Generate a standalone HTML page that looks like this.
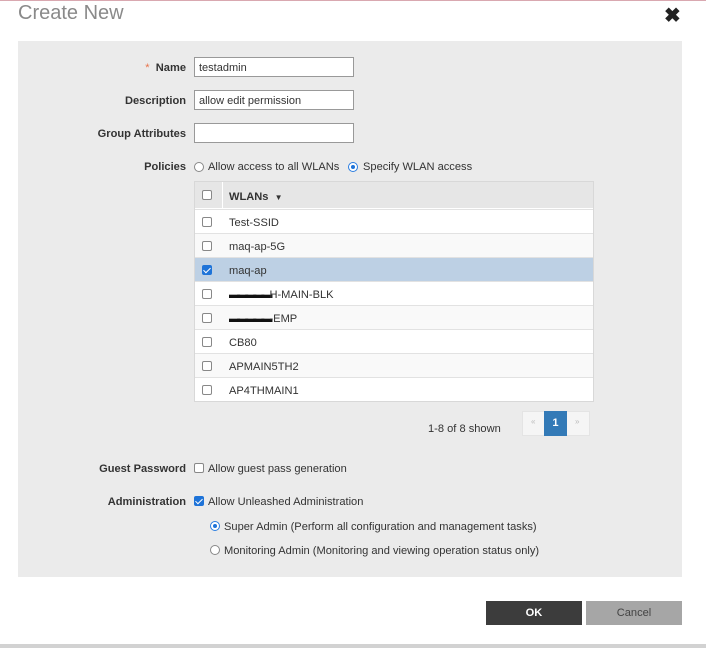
<!DOCTYPE html>
<html><head><style>
*{box-sizing:border-box;margin:0;padding:0}
body{width:706px;height:648px;background:#fff;font-family:"Liberation Sans",Arial,sans-serif;font-size:11.1px;color:#333;position:relative;overflow:hidden}
.a{position:absolute;white-space:nowrap}
.lbl{position:absolute;right:520px;font-weight:bold;color:#333}
.inp{position:absolute;left:194px;width:160px;height:20px;border:1px solid #999;background:#fff;padding:4px 4px;font-size:11px}
.cb{position:absolute;width:10px;height:10px;border:1px solid #888;border-radius:2px;background:#fff}
.cbc{background:#1e73d8;border-color:#1e73d8}
.cbc:after{content:"";position:absolute;left:2px;top:0px;width:3px;height:6px;border:solid #fff;border-width:0 1.5px 1.5px 0;transform:rotate(45deg)}
.rd{position:absolute;width:10px;height:10px;border:1px solid #888;border-radius:50%;background:#fff}
.rdc{border-color:#2a7de1}
.rdc:after{content:"";position:absolute;left:2px;top:2px;width:4px;height:4px;border-radius:50%;background:#1e73d8}
.row{position:absolute;left:195px;width:398px;height:24px;border-top:1px solid #e2e2e2}
.row span{position:absolute;left:34px;top:7px}
.row .cb{left:7px;top:7px}
</style></head><body>
<div class="a" style="left:0;top:0;width:706px;height:1px;background:#d9a8b0"></div>
<div class="a" style="left:18px;top:2px;font-size:20px;color:#8a8a8a">Create New</div>
<div class="a" style="left:664px;top:3px;font-size:20px;font-weight:bold;color:#222">✖</div>
<div class="a" style="left:18px;top:41px;width:664px;height:536px;background:#ebebeb"></div>

<div class="lbl" style="top:62px"><span style="color:#e8734a;font-weight:normal">*</span>&nbsp; Name</div>
<div class="inp" style="top:57px">testadmin</div>
<div class="lbl" style="top:95px">Description</div>
<div class="inp" style="top:90px">allow edit permission</div>
<div class="lbl" style="top:128px">Group Attributes</div>
<div class="inp" style="top:123px"></div>
<div class="lbl" style="top:161px">Policies</div>
<div class="rd" style="left:194px;top:162px"></div>
<div class="a" style="left:208px;top:161px">Allow access to all WLANs</div>
<div class="rd rdc" style="left:348px;top:162px"></div>
<div class="a" style="left:363px;top:161px">Specify WLAN access</div>

<div class="a" style="left:194px;top:181px;width:400px;height:221px;border:1px solid #d8d8d8;background:#fff"></div>
<div class="a" style="left:195px;top:182px;width:398px;height:26px;background:#e6e6e6"></div>
<div class="a" style="left:222px;top:182px;width:1px;height:26px;background:#fff"></div>
<div class="cb" style="left:202px;top:190px"></div>
<div class="a" style="left:229px;top:191px;font-weight:bold">WLANs &nbsp;<span style="font-size:8px">▼</span></div>
<div class="row" style="top:209px"><div class="cb"></div><span>Test-SSID</span></div>
<div class="row" style="top:233px;background:#f9f9f9"><div class="cb"></div><span>maq-ap-5G</span></div>
<div class="row" style="top:257px;background:#bdd0e4"><div class="cb cbc"></div><span>maq-ap</span></div>
<div class="row" style="top:281px"><div class="cb"></div><span><b style="letter-spacing:-3px;color:#111">▬▬▬▬▬</b>H-MAIN-BLK</span></div>
<div class="row" style="top:305px;background:#f9f9f9"><div class="cb"></div><span><b style="letter-spacing:-3px;color:#111">▬▬▬▬▬</b>-EMP</span></div>
<div class="row" style="top:329px"><div class="cb"></div><span>CB80</span></div>
<div class="row" style="top:353px;background:#f9f9f9"><div class="cb"></div><span>APMAIN5TH2</span></div>
<div class="row" style="top:377px"><div class="cb"></div><span>AP4THMAIN1</span></div>

<div class="a" style="left:428px;top:423px">1-8 of 8 shown</div>
<div class="a" style="left:522px;top:411px;width:68px;height:25px;background:#f5f5f5;border:1px solid #e4e4e4"></div>
<div class="a" style="left:531px;top:417px;font-size:8px;color:#bbb">«</div>
<div class="a" style="left:544px;top:411px;width:23px;height:25px;background:#337ab7;color:#fff;font-weight:bold;text-align:center;line-height:25px">1</div>
<div class="a" style="left:575px;top:417px;font-size:8px;color:#bbb">»</div>

<div class="lbl" style="top:463px">Guest Password</div>
<div class="cb" style="left:194px;top:463px"></div>
<div class="a" style="left:208px;top:463px">Allow guest pass generation</div>
<div class="lbl" style="top:496px">Administration</div>
<div class="cb cbc" style="left:194px;top:496px"></div>
<div class="a" style="left:208px;top:496px">Allow Unleashed Administration</div>
<div class="rd rdc" style="left:210px;top:521px"></div>
<div class="a" style="left:224px;top:521px">Super Admin (Perform all configuration and management tasks)</div>
<div class="rd" style="left:210px;top:545px"></div>
<div class="a" style="left:224px;top:545px">Monitoring Admin (Monitoring and viewing operation status only)</div>

<div class="a" style="left:486px;top:601px;width:96px;height:24px;background:#3c3c3c;color:#fff;font-weight:bold;text-align:center;line-height:24px">OK</div>
<div class="a" style="left:586px;top:601px;width:96px;height:24px;background:#a6a6a6;color:#444;text-align:center;line-height:24px">Cancel</div>
<div class="a" style="left:0;top:644px;width:706px;height:4px;background:#d2d2d2"></div>
</body></html>
